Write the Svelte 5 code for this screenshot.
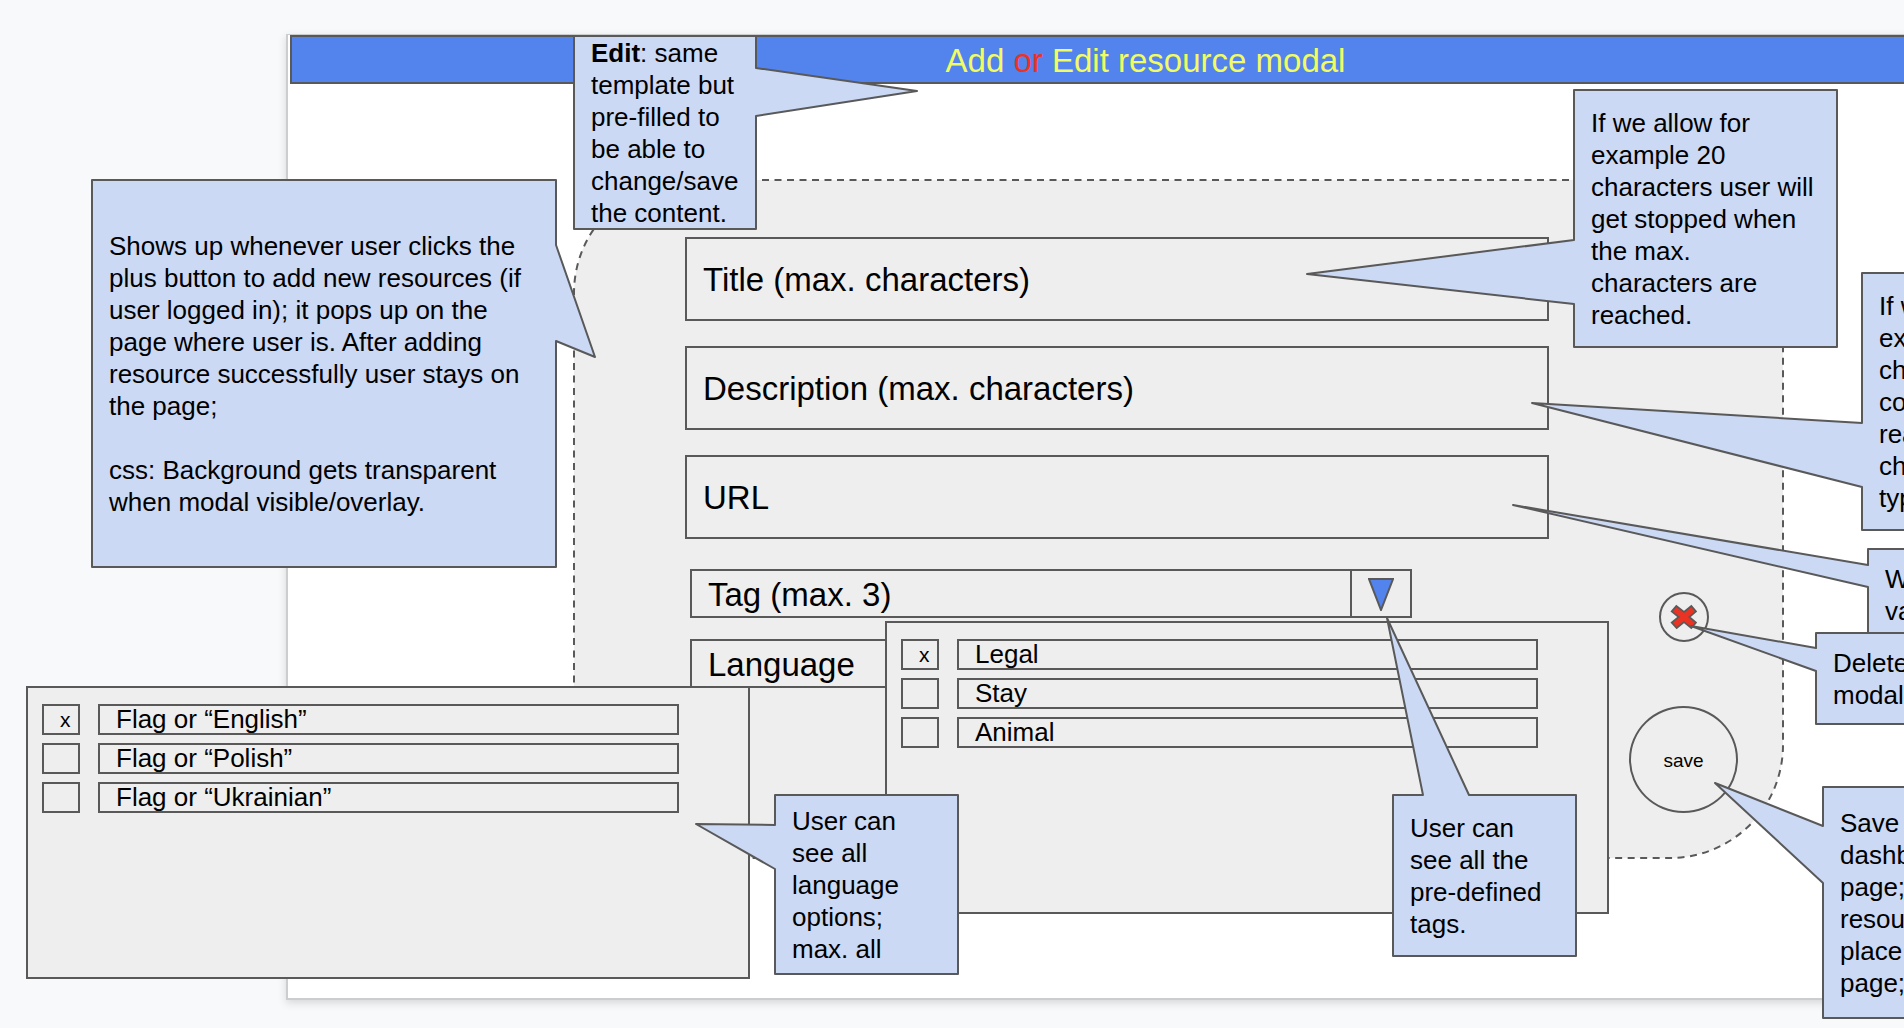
<script>
  const textFields = [
    { id: 'title', label: 'Title (max. characters)' },
    { id: 'description', label: 'Description (max. characters)' },
    { id: 'url', label: 'URL' }
  ];

  const pickers = [
    {
      name: 'tags',
      legend: 'Tags',
      options: [
        { label: 'Legal', checked: true },
        { label: 'Stay', checked: false },
        { label: 'Animal', checked: false }
      ]
    },
    {
      name: 'languages',
      legend: 'Languages',
      options: [
        { label: 'Flag or “English”', checked: true },
        { label: 'Flag or “Polish”', checked: false },
        { label: 'Flag or “Ukrainian”', checked: false }
      ]
    }
  ];

  // Board coordinates. `side` is the edge the pointer leaves from,
  // `from` and `to` are where it meets that edge.
  const notes = [
    {
      x: 92, y: 180, w: 464, h: 387, side: 'right', from: 245, to: 341, tip: [595, 357],
      text: 'Shows up whenever user clicks the\nplus button to add new resources (if\nuser logged in); it pops up on the\npage where user is. After adding\nresource successfully user stays on\nthe page;\n\ncss: Background gets transparent\nwhen modal visible/overlay.'
    },
    {
      x: 574, y: 36, w: 182, h: 193, side: 'right', from: 68, to: 116, tip: [917, 91],
      strong: 'Edit',
      text: ': same\ntemplate but\npre-filled to\nbe able to\nchange/save\nthe content.'
    },
    {
      x: 1574, y: 90, w: 263, h: 257, side: 'left', from: 240, to: 304, tip: [1307, 274],
      text: 'If we allow for\nexample 20\ncharacters user will\nget stopped when\nthe max.\ncharacters are\nreached.'
    },
    {
      x: 1862, y: 273, w: 263, h: 257, side: 'left', from: 423, to: 487, tip: [1532, 403],
      text: 'If we\nexample\ncharacters\ncount\nreached\ncharacters\ntyped.'
    },
    {
      x: 1868, y: 549, w: 183, h: 92, side: 'left', from: 565, to: 587, tip: [1513, 505],
      text: 'We\nvalidate'
    },
    {
      x: 1816, y: 633, w: 183, h: 91, side: 'left', from: 648, to: 671, tip: [1691, 626],
      text: 'Delete\nmodal'
    },
    {
      x: 1823, y: 787, w: 183, h: 231, side: 'left', from: 826, to: 883, tip: [1715, 783],
      text: 'Save\ndashboard\npage;\nresource\nplace\npage;'
    },
    {
      x: 1393, y: 795, w: 183, h: 161, side: 'top', from: 1423, to: 1469, tip: [1387, 618],
      text: 'User can\nsee all the\npre-defined\ntags.'
    },
    {
      x: 775, y: 795, w: 183, h: 179, side: 'left', from: 825, to: 869, tip: [696, 824],
      text: 'User can\nsee all\nlanguage\noptions;\nmax. all'
    }
  ];

  function outline({ x, y, w, h, side, from, to, tip }) {
    const t = [tip[0] - x, tip[1] - y];
    const corners = { tl: [0, 0], tr: [w, 0], br: [w, h], bl: [0, h] };
    const pts = [corners.tl];
    if (side === 'top') pts.push([from - x, 0], t, [to - x, 0]);
    pts.push(corners.tr);
    if (side === 'right') pts.push([w, from - y], t, [w, to - y]);
    pts.push(corners.br, corners.bl);
    if (side === 'left') pts.push([0, to - y], t, [0, from - y]);
    return pts.map((p) => p.join(',')).join(' ');
  }
</script>

<main class="board">
  <section class="sheet">
    <h1>Add <em>or</em> Edit resource modal</h1>

    <form class="modal" aria-label="Resource">
      <svg class="frame" aria-hidden="true">
        <rect width="100%" height="100%" rx="113" />
      </svg>

      <div class="fields">
        {#each textFields as field}
          <label class="field" for={field.id}>
            <span>{field.label}</span>
            <input id={field.id} type="text" />
          </label>
        {/each}

        <div class="selects">
          <div class="drop">
            <label for="tag">Tag (max. 3)</label>
            <input id="tag" type="text" />
            <button type="button" class="toggle" aria-label="Show tags" aria-expanded="true">
              <svg viewBox="0 0 26 34" aria-hidden="true"><path d="M1 2H25L13 33Z" /></svg>
            </button>
          </div>
          <div class="drop">
            <label for="language">Language</label>
            <input id="language" type="text" />
          </div>
        </div>
      </div>

      <div class="actions">
        <button type="button" class="delete" aria-label="Delete">
          <svg viewBox="6 6 138 138" aria-hidden="true">
            <path d="M52 42L75 60L97 42L111 58L91 75L111 92L97 108L75 90L53 108L38 92L59 75L38 58Z" />
          </svg>
        </button>
        <button type="button" class="save">save</button>
      </div>
    </form>
  </section>

  {#each pickers as picker}
    <div class="picker {picker.name}" role="group" aria-label={picker.legend}>
      {#each picker.options as option}
        <label class="option">
          <span class="tick">
            <input type="checkbox" bind:checked={option.checked} />
            {#if option.checked}<span class="mark" aria-hidden="true">x</span>{/if}
          </span>
          <span class="name">{option.label}</span>
        </label>
      {/each}
    </div>
  {/each}

  {#each notes as note}
    <aside
      class="note"
      style="left: {note.x}px; top: {note.y}px; width: {note.w}px; height: {note.h}px"
    >
      <svg aria-hidden="true"><polygon points={outline(note)} /></svg>
      <p>{#if note.strong}<strong>{note.strong}</strong>{/if}{note.text}</p>
    </aside>
  {/each}
</main>

<style>
  :global(body) {
    margin: 0;
    background: #f8f9fb;
  }

  .board {
    --line: #595959;
    --fill: #eeeeee;
    position: relative;
    box-sizing: border-box;
    min-height: 100vh;
    padding: 34px 0 28px 286px;
    overflow: hidden;
    background: #f8f9fb;
    color: #000;
    font-family: 'Liberation Sans', Arial, sans-serif;
    font-size: 26px;
    line-height: 32px;
  }

  .board * {
    box-sizing: border-box;
  }

  button,
  input {
    margin: 0;
    padding: 0;
    font: inherit;
    color: inherit;
    background: none;
    border: 0;
    border-radius: 0;
  }

  .sheet {
    margin-right: -101px;
    padding: 0 2px 140px;
    background: #fff;
    border: 2px solid #cccdce;
    border-top-width: 1px;
    box-shadow: 0 3px 8px rgba(60, 64, 67, 0.18);
  }

  h1 {
    margin: 0;
    padding: 6px 0 3px;
    background: #5383ec;
    border: 2px solid var(--line);
    color: #f1fb62;
    font-size: 33px;
    font-weight: 400;
    line-height: 36px;
    text-align: center;
  }

  h1 em {
    color: #ea3323;
    font-style: normal;
  }

  .modal {
    position: relative;
    display: grid;
    grid-template-columns: minmax(0, 1fr) 109px;
    column-gap: 80px;
    margin: 96px 218px 0 284px;
    padding: 57px 45px 45px 111px;
  }

  .frame {
    position: absolute;
    inset: 0;
    width: 100%;
    height: 100%;
    overflow: visible;
  }

  .frame rect {
    fill: var(--fill);
    stroke: var(--line);
    stroke-width: 2;
    stroke-dasharray: 7 5.5;
  }

  .fields {
    position: relative;
    display: flex;
    flex-direction: column;
    gap: 25px;
    font-size: 33px;
    line-height: 38px;
  }

  .field,
  .drop {
    display: flex;
    align-items: center;
    border: 2px solid var(--line);
    white-space: nowrap;
  }

  .field span,
  .drop label {
    padding-top: 2px;
  }

  .field {
    height: 84px;
    padding-left: 16px;
  }

  .field input,
  .drop input {
    flex: 1;
    min-width: 0;
    align-self: stretch;
    outline: 0;
  }

  .selects {
    display: flex;
    flex-direction: column;
    gap: 21px;
    padding: 5px 137px 0 5px;
  }

  .drop {
    height: 49px;
    padding-left: 16px;
  }

  .toggle {
    display: grid;
    place-items: center;
    align-self: stretch;
    width: 60px;
    border-left: 2px solid var(--line);
  }

  .toggle svg {
    width: 26px;
    height: 34px;
    fill: #5383ec;
    stroke: var(--line);
    stroke-width: 2;
  }

  .actions {
    position: relative;
    display: flex;
    flex-direction: column;
    align-items: center;
    gap: 64px;
    padding-top: 355px;
  }

  .delete,
  .save {
    border: 2px solid var(--line);
    border-radius: 50%;
  }

  .delete {
    display: grid;
    place-items: center;
    width: 50px;
    height: 50px;
  }

  .delete svg {
    width: 46px;
    height: 46px;
    fill: #ea3323;
    stroke: var(--line);
    stroke-width: 5;
  }

  .save {
    width: 109px;
    height: 107px;
    padding-top: 2px;
    font-size: 19px;
  }

  .picker {
    position: absolute;
    display: flex;
    flex-direction: column;
    gap: 8px;
    width: 724px;
    height: 293px;
    padding: 16px 69px 0 14px;
    background: var(--fill);
    border: 2px solid var(--line);
  }

  .tags {
    left: 885px;
    top: 621px;
  }

  .languages {
    left: 26px;
    top: 686px;
  }

  .option {
    display: flex;
    gap: 18px;
    height: 31px;
    line-height: 27px;
  }

  .tick {
    display: grid;
    width: 38px;
  }

  .tick input {
    grid-area: 1 / 1;
    appearance: none;
    width: 100%;
    height: 31px;
    border: 2px solid var(--line);
  }

  .mark {
    grid-area: 1 / 1;
    padding-left: 18px;
    font-size: 21px;
    line-height: 31px;
    pointer-events: none;
  }

  .name {
    flex: 1;
    padding-left: 16px;
    border: 2px solid var(--line);
  }

  .note {
    position: absolute;
    display: flex;
    align-items: center;
    padding-left: 17px;
  }

  .note svg {
    position: absolute;
    inset: 0;
    width: 100%;
    height: 100%;
    overflow: visible;
    fill: #cbd9f5;
    stroke: var(--line);
    stroke-width: 2;
    stroke-linejoin: round;
    pointer-events: none;
  }

  .note p {
    position: relative;
    margin: 0;
    white-space: pre;
  }
</style>
